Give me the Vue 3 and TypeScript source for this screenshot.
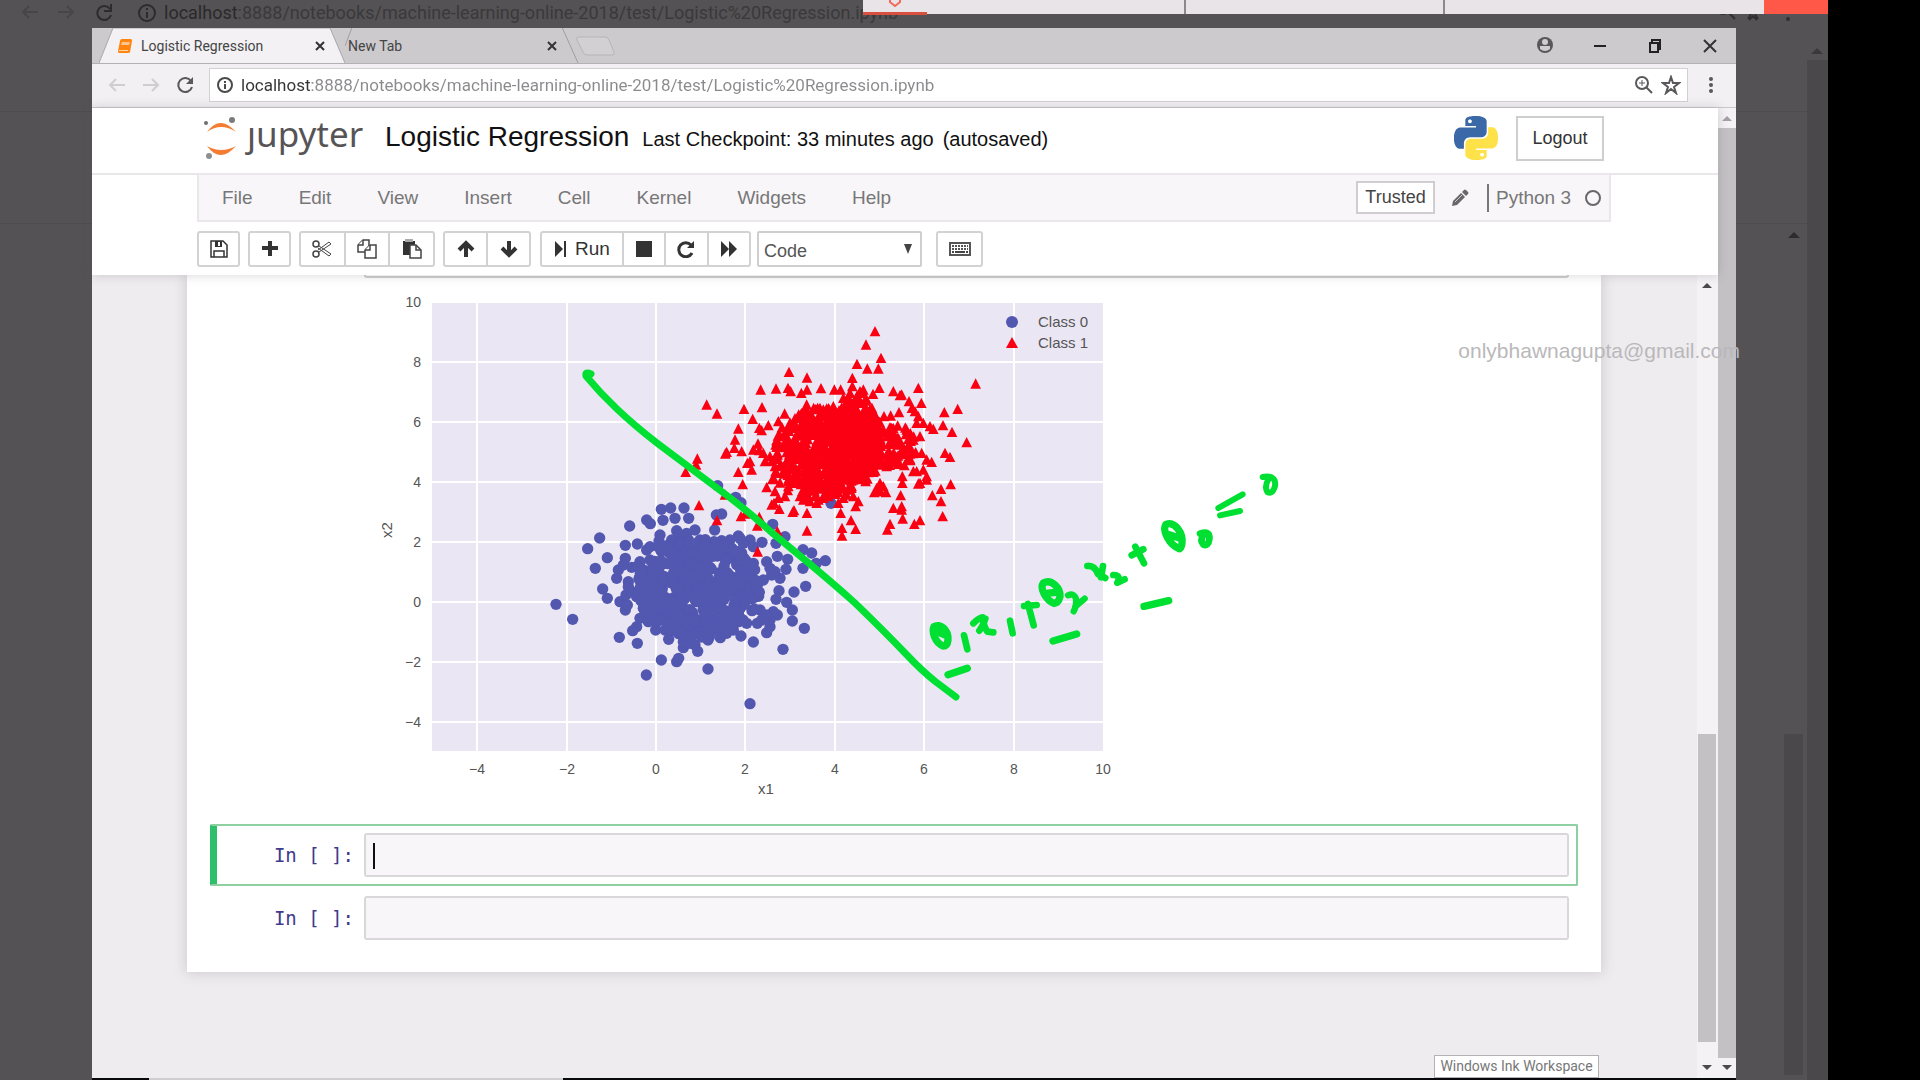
<script setup lang="ts">
import { ref } from 'vue'

type Point = [number, number]

const menus = ['File', 'Edit', 'View', 'Insert', 'Cell', 'Kernel', 'Widgets', 'Help']
const address = ref('localhost:8888/notebooks/machine-learning-online-2018/test/Logistic%20Regression.ipynb')
const cellType = ref('Code')
const cells = ref([
  { source: '', active: true },
  { source: '', active: false },
])

const xTicks = [-4, -2, 0, 2, 4, 6, 8, 10]
const yTicks = [10, 8, 6, 4, 2, 0, -2, -4]
const px = (v: number): number => 656 + Math.round((v * 447) / 10)
const py = (v: number): number => 602 - v * 30
const tick = (v: number): string => (v < 0 ? `\u2212${-v}` : `${v}`)

/* Small seeded generator so the dense part of each cluster is stable between renders. */
function cloud(seed: number, count: number, cx: number, cy: number, rx: number, ry: number): Point[] {
  let s = seed
  const next = (): number => {
    s = (s * 16807) % 2147483647
    return s / 2147483647
  }
  return Array.from({ length: count }, (): Point => {
    const angle = next() * Math.PI * 2
    const radius = Math.sqrt(next())
    return [Math.round(cx + Math.cos(angle) * radius * rx), Math.round(cy + Math.sin(angle) * radius * ry)]
  })
}

const classZero: Point[] = [
  [48, 373], [98, 418], [143, 206], [179, 174], [202, 233], [166, 265], [188, 327], [202, 355], [238, 472],
  [292, 490], [269, 138], [320, 120], [331, 131], [364, 88], [392, 84], [432, 84], [369, 121], [405, 115],
  [446, 115], [256, 196], [292, 192], [360, 165], [320, 210], [256, 235], [357, 183], [364, 540], [410, 545],
  [416, 535], [319, 585], [504, 567], [630, 671], [640, 486], [729, 508], [793, 445], [757, 423], [757, 390],
  [740, 367], [762, 336], [797, 319], [717, 332], [708, 358], [856, 242], [829, 250], [815, 219], [789, 209],
  [789, 265], [743, 238], [712, 229], [738, 268], [735, 170], [698, 133], [708, 190], [666, 187], [545, 102],
  [529, 105], [524, 150], [533, 17], [587, 52], [603, 68], [873, 70], [386, 478], [347, 450], [430, 503],
  [473, 514], [504, 480], [541, 473], [603, 468], [680, 458], [290, 440], [278, 452], [256, 390], [240, 365],
  [262, 375], [230, 295], [235, 270], [265, 305], [265, 320], [595, 168], [545, 182], [520, 190], [440, 160],
  [410, 152], [465, 150], [480, 180], [620, 430], [652, 430], [690, 440], [712, 405], [720, 295], [680, 245],
  [630, 180], [250, 255], [275, 262], [300, 245], [290, 350], [700, 395], [695, 285], [690, 420], [705, 275],
  [450, 490], [465, 495], [440, 470], [455, 470], [610, 190], [385, 195], [310, 385], [300, 415], [660, 390],
  [258, 345], [275, 335], [330, 200], [395, 180], [420, 165], [570, 180], [640, 200], [600, 175], [670, 300],
  [690, 265], [640, 250], [325, 425], [345, 420], [375, 450], [680, 405], [665, 420], [580, 450], [560, 460],
  [310, 270], [330, 240], [290, 260], [650, 325], [640, 350], [505, 465], [430, 485], [355, 200], [555, 200],
  ...cloud(4217, 430, 478, 325, 186, 148),
]

const classOne: Point[] = [
  [525, 155], [498, 195], [543, 235], [471, 253], [502, 267], [535, 267], [457, 295], [267, 277], [321, 294],
  [182, 330], [228, 327], [264, 325], [272, 335], [321, 330], [304, 340], [363, 326], [403, 330], [422, 330],
  [457, 320], [490, 330], [538, 325], [519, 343], [580, 335], [600, 347], [627, 365], [655, 325], [664, 370],
  [733, 398], [773, 388], [827, 312], [729, 437], [756, 457], [800, 488], [735, 520], [750, 532], [752, 614],
  [723, 628], [697, 647], [723, 665], [728, 710], [660, 722], [643, 733], [608, 717], [570, 733], [562, 750],
  [602, 647], [467, 748], [453, 722], [426, 745], [426, 768], [321, 753], [321, 700], [282, 692], [278, 697],
  [422, 700], [467, 680], [475, 665], [215, 675], [238, 688], [200, 623], [128, 614], [115, 577], [155, 570],
  [142, 550], [150, 545], [125, 515], [80, 517], [76, 522], [105, 480], [103, 505], [115, 447], [158, 418],
  [132, 388], [186, 383], [20, 375], [51, 402], [178, 445], [205, 437], [185, 452], [174, 492], [160, 510],
  [190, 520], [195, 545], [210, 530], [178, 512], [235, 425], [254, 402], [320, 375], [353, 385], [400, 380],
  [430, 355], [470, 350], [500, 360], [552, 410], [572, 408], [597, 398], [636, 385], [655, 410], [690, 440],
  [700, 448], [660, 470], [620, 450], [640, 480], [665, 520], [680, 540], [695, 547], [610, 515], [590, 545],
  [560, 560], [650, 575], [640, 575], [670, 570], [660, 610], [680, 600], [655, 612], [607, 590], [607, 610],
  [580, 685], [605, 690], [605, 680], [497, 605], [575, 445], [630, 522], [570, 490], [540, 610], [530, 625],
  [540, 635], [550, 620], [558, 638], [523, 638], [490, 340], [480, 335], [450, 340], [235, 655], [230, 580],
  [225, 635], [255, 650], [310, 660], [330, 665], [350, 670], [375, 650], [430, 655], [415, 670], [440, 645],
  [375, 640], [670, 430], [680, 590], [550, 450], [520, 410], [510, 390], [455, 620], [460, 650], [300, 650],
  [-43, 577], [-8, 537], [-12, 555], [-3, 677], [51, 722], [75, 645], [123, 710], [136, 702], [178, 712],
  [172, 738], [232, 755], [173, 816], [265, 620], [285, 610], [345, 650], [320, 640], [400, 610], [425, 620],
  [645, 395], [650, 430], [605, 345], [570, 540], [540, 555], [520, 575], [215, 545], [225, 560], [480, 370],
  [520, 430], [530, 440], [495, 385], [440, 365], [455, 375], [325, 655], [355, 660], [305, 645], [222, 670],
  ...cloud(9181, 560, 385, 508, 162, 132),
  ...cloud(733, 75, 575, 500, 75, 68),
  ...cloud(5521, 70, 475, 450, 75, 95),
  ...cloud(2801, 45, 330, 590, 115, 75),
]
const triangle = ([x, y]: Point): string => `M${x} ${y - 17}l16 31h-32z`
const classOnePath = classOne.map(triangle).join('')
</script>

<template>
  <div class="screen">
    <div class="desktop">
      <div class="backdrop" aria-hidden="true">
        <div class="back-bar">
          <svg class="back-nav" viewBox="0 0 140 26" width="140" height="26" fill="none" stroke="#474548" stroke-width="2">
            <path d="M38 12H23M29 6l-6 6 6 6M58 12h15M67 6l6 6-6 6" />
            <path d="M110 9a7 7 0 1 0 1 6M111 4v7h-7" stroke="#2c2b2d" />
          </svg>
          <svg class="back-info" viewBox="0 0 18 18" width="18" height="18"><circle cx="9" cy="9" r="8" fill="none" stroke="#2c2b2d" stroke-width="2" /><path d="M9 8v6M9 4v2" stroke="#2c2b2d" stroke-width="2" /></svg>
          <span class="back-url"><b>localhost</b>:8888/notebooks/machine-learning-online-2018/test/Logistic%20Regression.ipynb</span>
        </div>
        <div class="back-rule"></div>
        <div class="back-rule lower"></div>
        <svg class="back-icons" viewBox="0 0 110 24" width="110" height="24" fill="none" stroke="#302f31" stroke-width="2">
          <circle cx="15" cy="5" r="6" /><path d="M20 9l7 7M40 16l3-5M50 16l-3-5M41 17l4-4 4 4" /><circle cx="80" cy="16" r="1" />
        </svg>
        <div class="back-track"><svg viewBox="0 0 12 7" width="12" height="7"><path d="M0 7l6-6 6 6z" fill="#39383a" /></svg></div>
        <div class="back-thumb"></div>
        <svg class="back-arrow" viewBox="0 0 12 7" width="12" height="7"><path d="M0 7l6-6 6 6z" fill="#2c2b2d" /></svg>
      </div>

      <div class="peek" aria-hidden="true">
        <div class="peek-tab"><svg viewBox="0 0 12 8" width="12" height="8"><path d="M1 0v2l5 4 5-4V0" fill="none" stroke="#f4695a" stroke-width="2" /></svg></div>
        <div class="peek-cell first"></div>
        <div class="peek-cell second"></div>
        <div class="peek-cell third"></div>
        <div class="peek-close"></div>
      </div>

      <main class="window">
        <div class="tabstrip">
          <div class="tab active">
            <svg class="tab-shape" viewBox="0 0 246 35" preserveAspectRatio="none"><path d="M0 35L14 0H231L246 35" fill="#f3f1f4" stroke="#a9a7aa" vector-effect="non-scaling-stroke" /></svg>
            <svg viewBox="0 0 16 16" width="16" height="16"><path d="M5 1h9q1 0 1 2l-2 11q0 1-2 1H2q-1 0-1-2L3 3q0-2 2-2z" fill="#ff8410" /><path d="M5 4h8l-1 3H4z" fill="#ffc58c" /><path d="M2 12h9v1H2z" fill="#ffd9a8" /></svg>
            <span class="tab-title">Logistic Regression</span>
            <button class="tab-close" aria-label="Close tab"><svg viewBox="0 0 10 10" width="10" height="10"><path d="M1 1l8 8M9 1l-8 8" stroke="#333" stroke-width="2" /></svg></button>
          </div>
          <div class="tab idle">
            <svg class="tab-shape" viewBox="0 0 239 35" preserveAspectRatio="none"><path d="M0 18L7 0M222 0L238 35" fill="none" stroke="#a09ea1" vector-effect="non-scaling-stroke" /></svg>
            <span class="tab-title">New Tab</span>
            <button class="tab-close" aria-label="Close tab"><svg viewBox="0 0 10 10" width="10" height="10"><path d="M1 1l8 8M9 1l-8 8" stroke="#333" stroke-width="2" /></svg></button>
          </div>
          <button class="tab-new" aria-label="New tab"><svg viewBox="0 0 42 22" width="42" height="22"><path d="M3 2h27q3 0 4 3l5 12q1 3-2 3H12q-3 0-4-3L2 5q-1-3 1-3z" fill="#d3d0d3" stroke="#b6b4b7" /></svg></button>
          <div class="window-tools">
            <button aria-label="Profile"><svg viewBox="0 0 18 18" width="18" height="18"><circle cx="9" cy="8" r="8" fill="#59575a" /><circle cx="9" cy="5" r="3" fill="#d0cdd0" /><path d="M4 12V9h10v3q-5 4-10 0z" fill="#d0cdd0" /></svg></button>
            <button aria-label="Minimise"><svg viewBox="0 0 18 18" width="18" height="18"><path d="M3 9h12" stroke="#222" stroke-width="2" /></svg></button>
            <button aria-label="Restore"><svg viewBox="0 0 18 18" width="18" height="18"><path d="M4 6h8v9H4zM6 6V3h8v9h-2" fill="none" stroke="#222" stroke-width="2" /></svg></button>
            <button aria-label="Close"><svg viewBox="0 0 18 18" width="18" height="18"><path d="M3 3l12 12M15 3L3 15" stroke="#333" stroke-width="2" /></svg></button>
          </div>
        </div>

        <div class="toolbar">
          <button aria-label="Back"><svg viewBox="0 0 20 20" width="20" height="20"><path d="M18 10H3M9 4l-6 6 6 6" fill="none" stroke="#cfcdd0" stroke-width="2" /></svg></button>
          <button aria-label="Forward"><svg viewBox="0 0 20 20" width="20" height="20"><path d="M2 10h15M11 4l6 6-6 6" fill="none" stroke="#cfcdd0" stroke-width="2" /></svg></button>
          <button aria-label="Reload"><svg viewBox="0 0 20 20" width="20" height="20"><path d="M16 6a7 7 0 1 0 1 6" fill="none" stroke="#59575a" stroke-width="2" /><path d="M18 2v7h-7z" fill="#59575a" /></svg></button>
          <div class="omnibox">
            <svg viewBox="0 0 18 18" width="18" height="18"><circle cx="9" cy="9" r="7" fill="none" stroke="#4b494c" stroke-width="2" /><path d="M9 8v5M9 5v2" stroke="#4b494c" stroke-width="2" /></svg>
            <input v-model="address" class="address" aria-label="Address" spellcheck="false" />
            <button aria-label="Zoom"><svg viewBox="0 0 20 20" width="20" height="20" fill="none" stroke="#59575a" stroke-width="2"><circle cx="9" cy="8" r="6" /><path d="M13 12l6 6" /><path d="M9 5v6M6 8h6" stroke-width="1" /></svg></button>
            <button aria-label="Bookmark"><svg viewBox="0 0 20 20" width="20" height="20"><path d="M10 2l2 6h6l-5 4 2 6-5-4-5 4 2-6-5-4h6z" fill="none" stroke="#59575a" stroke-width="2" /></svg></button>
          </div>
          <button class="kebab" aria-label="Menu"><svg viewBox="0 0 6 20" width="6" height="20" fill="#59575a"><circle cx="3" cy="4" r="2" /><circle cx="3" cy="10" r="2" /><circle cx="3" cy="16" r="2" /></svg></button>
        </div>

        <div class="viewport">
          <div class="page">
            <header class="header">
              <div class="title-row">
                <a class="brand" href="#" aria-label="Jupyter home">
                  <svg viewBox="0 0 36 44" width="36" height="44"><path d="M4 16Q17-2 33 16Q18 6 4 16z" fill="#f37e33" /><path d="M4 30Q17 48 33 30Q18 38 4 30z" fill="#f37e33" /><circle cx="3" cy="7" r="2" fill="#6f6e70" /><circle cx="29" cy="4" r="3" fill="#7a797b" /><circle cx="6" cy="40" r="3" fill="#8f8e90" /></svg>
                  <span>ȷupyter</span>
                </a>
                <h1>Logistic Regression</h1>
                <span class="checkpoint">Last Checkpoint: 33 minutes ago</span>
                <span class="autosave">(autosaved)</span>
                <svg class="python" viewBox="0 0 24 24" width="44" height="44">
                  <path fill="#3b69a8" d="M14.25.18l.9.2.73.26.59.3.45.32.34.34.25.34.16.33.1.3.04.26.02.2-.01.13V8.5l-.05.63-.13.55-.21.46-.26.38-.3.31-.33.25-.35.19-.35.14-.33.1-.3.07-.26.04-.21.02H8.77l-.69.05-.59.14-.5.22-.41.27-.33.32-.27.35-.2.36-.15.37-.1.35-.07.32-.04.27-.02.21v3.06H3.17l-.21-.03-.28-.07-.32-.12-.35-.18-.36-.26-.36-.36-.35-.46-.32-.59-.28-.73-.21-.88-.14-1.05-.05-1.23.06-1.22.16-1.04.24-.87.32-.71.36-.57.4-.44.42-.33.42-.24.4-.16.36-.1.32-.05.24-.01h.16l.06.01h8.16v-.83H6.18l-.01-2.75-.02-.37.05-.34.11-.31.17-.28.25-.26.31-.23.38-.2.44-.18.51-.15.58-.12.64-.1.71-.06.77-.04.84-.02 1.27.05zm-6.3 1.98l-.23.33-.08.41.08.41.23.34.33.22.41.09.41-.09.33-.22.23-.34.08-.41-.08-.41-.23-.33-.33-.22-.41-.09-.41.09z" />
                  <path fill="#ffe24a" d="M21.04 6.11l.28.06.32.12.35.18.36.27.36.35.35.47.32.59.28.73.21.88.14 1.04.05 1.23-.06 1.23-.16 1.04-.24.86-.32.71-.36.57-.4.45-.42.33-.42.24-.4.16-.36.09-.32.05-.24.02-.16-.01h-8.22v.82h5.84l.01 2.76.02.36-.05.34-.11.31-.17.29-.25.25-.31.24-.38.2-.44.17-.51.15-.58.13-.64.09-.71.07-.77.04-.84.01-1.27-.04-1.07-.14-.9-.2-.73-.25-.59-.3-.45-.33-.34-.34-.25-.34-.16-.33-.1-.3-.04-.25-.02-.2.01-.13v-5.34l.05-.64.13-.54.21-.46.26-.38.3-.32.33-.24.35-.2.35-.14.33-.1.3-.06.26-.04.21-.02.13-.01h5.84l.69-.05.59-.14.5-.21.41-.28.33-.32.27-.35.2-.36.15-.36.1-.35.07-.32.04-.28.02-.21V6.07h2.09l.14.01zm-6.47 14.25l-.23.33-.08.41.08.41.23.33.33.23.41.08.41-.08.33-.23.23-.33.08-.41-.08-.41-.23-.33-.33-.23-.41-.08-.41.08z" />
                </svg>
                <button class="logout">Logout</button>
              </div>

              <nav class="menubar">
                <a v-for="menu in menus" :key="menu" href="#" class="menu">{{ menu }}</a>
                <button class="trusted">Trusted</button>
                <svg class="pencil" viewBox="0 0 18 18" width="18" height="18"><path d="M1 17l1-5 8-8 4 4-8 8zM11 3l2-2q1-1 2 0l2 2q1 1 0 2l-2 2z" fill="#69676a" /><path d="M4 13l7-7" stroke="#c9c7ca" /></svg>
                <div class="kernel">
                  <span>Python 3</span>
                  <svg viewBox="0 0 18 18" width="18" height="18"><circle cx="9" cy="9" r="7" fill="none" stroke="#69676a" stroke-width="2" /></svg>
                </div>
              </nav>

              <div class="actions">
                <div class="group save"><button aria-label="Save"><svg viewBox="0 0 18 18" width="18" height="18" fill="none" stroke="#333" stroke-width="2"><path d="M1 1h12l4 4v12H1z" stroke-width="1.5" /><path d="M4 17v-6h10v6" stroke-width="1.5" /><path d="M5 1v6h7V1z" fill="#333" stroke="none" /><path d="M9 2v4" stroke="#fff" /></svg></button></div>
                <div class="group add"><button aria-label="Insert cell"><svg viewBox="0 0 18 18" width="18" height="18"><path d="M9 1v15M1 8h16" stroke="#333" stroke-width="4" /></svg></button></div>
                <div class="group edit">
                  <button aria-label="Cut"><svg viewBox="0 0 20 18" width="20" height="18" fill="none" stroke="#444"><circle cx="4" cy="4" r="3" stroke-width="1.5" /><circle cx="4" cy="14" r="3" stroke-width="1.5" /><path d="M7 6l12 8-2 2L6 8M7 12l12-8-2-2L6 10" /></svg></button>
                  <button aria-label="Copy"><svg viewBox="0 0 20 20" width="20" height="20" fill="#fff" stroke="#444" stroke-width="1.5"><path d="M6 1h6v12H1V6z" /><path d="M6 1v5H1" /><path d="M13 6h6v13H8v-8z" /><path d="M13 6v5H8" /></svg></button>
                  <button aria-label="Paste"><svg viewBox="0 0 20 20" width="20" height="20"><path d="M1 2h12v14H1z" fill="#333" /><path d="M3 0h8v3H3z" fill="#aaa" /><path d="M8 6h6l5 5v8H8z" fill="#fff" stroke="#444" stroke-width="1.5" /><path d="M14 6v5h5" fill="none" stroke="#444" stroke-width="1.5" /></svg></button>
                </div>
                <div class="group move">
                  <button aria-label="Move up"><svg viewBox="0 0 18 18" width="18" height="18"><path d="M9 17V3M2 10l7-7 7 7" fill="none" stroke="#333" stroke-width="4" /></svg></button>
                  <button aria-label="Move down"><svg viewBox="0 0 18 18" width="18" height="18"><path d="M9 1v14M2 8l7 7 7-7" fill="none" stroke="#333" stroke-width="4" /></svg></button>
                </div>
                <div class="group run">
                  <button class="run-button"><svg viewBox="0 0 13 18" width="13" height="18"><path d="M1 1l8 8-8 8zM10 1h2v16h-2z" fill="#333" /></svg>Run</button>
                  <button aria-label="Interrupt"><svg viewBox="0 0 18 18" width="18" height="18"><path d="M1 1h16v16H1z" fill="#333" /></svg></button>
                  <button aria-label="Restart"><svg viewBox="0 0 18 18" width="18" height="18"><path d="M14 5a7 7 0 1 0 1 8" fill="none" stroke="#333" stroke-width="3" /><path d="M17 1v7h-7z" fill="#333" /></svg></button>
                  <button aria-label="Restart and run all"><svg viewBox="0 0 18 18" width="18" height="18"><path d="M1 1l8 8V1l8 8-8 8V9l-8 8z" fill="#333" /></svg></button>
                </div>
                <div class="type-picker">
                  <select v-model="cellType" aria-label="Cell type">
                    <option>Code</option>
                    <option>Markdown</option>
                  </select>
                  <svg viewBox="0 0 8 10" width="8" height="10"><path d="M0 0h8L4 10z" fill="#444" /></svg>
                </div>
                <div class="group palette"><button aria-label="Command palette"><svg viewBox="0 0 22 14" width="22" height="14"><path d="M1 1h20v12H1z" fill="#fff" stroke="#555" stroke-width="2" /><path d="M3 4h16M3 7h16" stroke="#555" stroke-width="2" stroke-dasharray="2 1" /><path d="M3 10h2M6 10h10M17 10h2" stroke="#444" stroke-width="2" /></svg></button></div>
              </div>
            </header>

            <div class="site">
              <div class="notebook">
                <div class="sheet">
                  <div class="previous-input"></div>
                  <svg class="plot" viewBox="364 278 936 546" role="img" aria-label="Scatter plot of two classes">
                    <rect x="432" y="303" width="671" height="448" fill="#ebe6f4" />
                    <g stroke="#fff" stroke-width="2">
                      <line v-for="v in xTicks.slice(0, 7)" :key="'gx' + v" :x1="px(v)" :x2="px(v)" y1="303" y2="751" />
                      <line v-for="v in yTicks.slice(1)" :key="'gy' + v" x1="432" x2="1103" :y1="py(v)" :y2="py(v)" />
                    </g>
                    <g class="ticks">
                      <text v-for="v in xTicks" :key="'tx' + v" :x="px(v)" y="774" text-anchor="middle">{{ tick(v) }}</text>
                      <text v-for="v in yTicks" :key="'ty' + v" x="421" :y="py(v) + 5" text-anchor="end">{{ tick(v) }}</text>
                    </g>
                    <text class="axis" x="766" y="794" text-anchor="middle">x1</text>
                    <text class="axis" text-anchor="middle" transform="translate(392 530) rotate(-90)">x2</text>
                    <g transform="translate(540 480) scale(.33333)" fill="#5257b0">
                      <circle v-for="(p, i) in classZero" :key="i" :cx="p[0]" :cy="p[1]" r="17" />
                    </g>
                    <path :d="classOnePath" transform="translate(700 280) scale(.33333)" fill="#fb0012" />
                    <circle cx="1012" cy="322" r="6" fill="#5257b0" />
                    <path d="M1012 337l6 11h-12z" fill="#fb0012" />
                    <g class="legend">
                      <text x="1038" y="327">Class 0</text>
                      <text x="1038" y="348">Class 1</text>
                    </g>
                    <g fill="none" stroke="#00e033" stroke-linecap="round" stroke-linejoin="round">
                      <path d="M591 374Q585 371 586 376Q600 393 617 409Q635 426 657 443L717 488Q747 510 770 531L811 565Q835 585 855 603Q883 630 906 654Q922 671 936 682L956 697" stroke-width="7" />
                      <g transform="translate(900 450) scale(.33333)" stroke-width="22">
                        <path d="M130 588C105 580 95 545 102 530C120 518 146 540 144 570Q142 588 130 588M110 545L138 556" />
                        <path d="M192 556L202 598M220 520Q236 504 248 502Q250 528 262 545L280 547M256 506Q248 530 238 542M330 512L338 550" stroke-width="20" />
                        <path d="M372 468L410 465M384 462L401 526" stroke-width="20" />
                        <path d="M462 460C438 450 418 415 430 399C455 385 482 415 480 440Q475 460 462 460M440 430L474 426" />
                        <path d="M504 436Q522 428 528 446Q530 468 521 484M526 470L554 446" stroke-width="19" />
                        <path d="M562 348Q584 346 594 372L616 384M609 348L603 382M640 375Q664 374 652 398L674 388" stroke-width="20" />
                        <path d="M695 316L730 298M706 290L732 340" stroke-width="20" />
                        <path d="M838 296C808 285 785 240 798 223C825 212 850 250 846 280Q844 296 838 296M808 254L838 264" />
                        <path d="M900 251Q932 240 928 268Q925 290 910 284Q898 270 912 254" stroke-width="20" />
                        <path d="M955 174L1028 133M960 196L1020 183M1088 81Q1130 74 1125 108Q1118 134 1102 126Q1092 110 1106 86" stroke-width="18" />
                        <path d="M144 674L202 655M459 573L530 552M732 469L806 452" />
                      </g>
                    </g>
                  </svg>
                  <div v-for="(cell, i) in cells" :key="i" class="cell" :class="{ selected: cell.active }">
                    <label class="prompt" :for="'cell-' + i">In [ ]:</label>
                    <div class="input-area">
                      <textarea :id="'cell-' + i" v-model="cell.source" rows="1"></textarea>
                      <div v-if="cell.active" class="caret"></div>
                    </div>
                  </div>
                </div>
              </div>
              <div class="scroll inner">
                <svg viewBox="0 0 10 6" width="10" height="6"><path d="M0 6l5-5 5 5z" fill="#4b494c" /></svg>
                <div class="scroll-gap"></div>
                <div class="thumb"></div>
                <svg viewBox="0 0 10 6" width="10" height="6"><path d="M0 0l5 5 5-5z" fill="#4b494c" /></svg>
              </div>
            </div>
          </div>
          <div class="scroll outer">
            <svg viewBox="0 0 10 6" width="10" height="6"><path d="M0 6l5-5 5 5z" fill="#a3a1a4" /></svg>
            <div class="thumb"></div>
            <svg viewBox="0 0 10 6" width="10" height="6"><path d="M0 0l5 5 5-5z" fill="#4b494c" /></svg>
          </div>
        </div>
        <div class="taskbar"></div>
        <div class="tooltip" role="tooltip">Windows Ink Workspace</div>
        <div class="watermark">onlybhawnagupta@gmail.com</div>
      </main>
    </div>
  </div>
</template>

<style>
body {
  margin: 0;
  background: #000;
}
</style>

<style scoped>
* {
  box-sizing: border-box;
}
.screen {
  height: 100vh;
  padding-right: 92px;
  overflow: hidden;
  background: #000;
  font-family: 'Liberation Sans', Arial, sans-serif;
}
svg {
  display: block;
  flex: none;
}
button {
  display: flex;
  align-items: center;
  justify-content: center;
  margin: 0;
  padding: 0;
  border: 0;
  background: none;
  font-family: inherit;
}
a {
  color: inherit;
  text-decoration: none;
}
.desktop {
  position: relative;
  height: 100%;
  padding: 28px 92px 0;
  overflow: hidden;
  background: #545254;
}

/* dimmed browser behind the window */
.backdrop,
.peek {
  position: absolute;
  top: 0;
  right: 0;
}
.backdrop {
  bottom: 0;
  left: 0;
}
.back-bar {
  display: flex;
  align-items: center;
  height: 26px;
}
.back-info {
  margin: 0 8px 0 -2px;
}
.back-url {
  color: #3a393b;
  font: 18px/26px Roboto, sans-serif;
  white-space: nowrap;
}
.back-url b {
  color: #2a292b;
  font-weight: 400;
}
.back-rule {
  height: 86px;
  border-bottom: 1px solid #4d4b4e;
}
.back-rule.lower {
  height: 112px;
}
.back-icons {
  position: absolute;
  top: 3px;
  right: 10px;
}
.back-track {
  position: absolute;
  top: 40px;
  right: 0;
  bottom: 0;
  width: 21px;
  padding: 7px 4px;
  background: linear-gradient(#545254 20px, #4a484b 20px);
}
.back-thumb {
  position: absolute;
  top: 734px;
  right: 25px;
  bottom: 5px;
  width: 19px;
  background: #4a484b;
}
.back-arrow {
  position: absolute;
  top: 231px;
  right: 28px;
}
.peek {
  display: flex;
  width: 965px;
  height: 14px;
}
.peek-tab {
  display: flex;
  justify-content: center;
  width: 64px;
  height: 15px;
  border-bottom: 3px solid #d9503f;
  background: #e8e4e7;
}
.peek-cell {
  border-right: 2px solid #8b898c;
  background: #e8e4e7;
}
.peek-cell.first {
  flex: 258;
}
.peek-cell.second {
  flex: 258;
}
.peek-cell.third {
  flex: 321;
  border: 0;
}
.peek-close {
  width: 64px;
  background: #ff5848;
}

/* browser window */
.window {
  position: relative;
  display: flex;
  flex-direction: column;
  height: 100%;
  background: #f2f0f3;
}
.tabstrip {
  display: flex;
  align-items: center;
  height: 36px;
  padding-left: 7px;
  border-bottom: 1px solid #b3b1b4;
  background: #cdcacd;
  color: #444;
  font: 14px/20px Roboto, sans-serif;
}
.tab {
  position: relative;
  display: flex;
  align-items: center;
  height: 35px;
}
.tab.active {
  width: 246px;
  padding: 0 20px 0 18px;
}
.tab.idle {
  width: 234px;
  padding: 0 22px 0 3px;
}
.tab-shape {
  position: absolute;
  inset: 0;
  width: 100%;
  height: 100%;
}
.tab > :not(.tab-shape) {
  position: relative;
}
.tab.active .tab-title {
  margin-left: 8px;
}
.tab-close {
  margin-left: auto;
}
.tab-new {
  margin-left: -4px;
}
.window-tools {
  display: flex;
  gap: 37px;
  margin-left: auto;
  padding-right: 17px;
}
.toolbar {
  display: flex;
  align-items: center;
  height: 44px;
  padding: 0 22px 1px 15px;
  border-bottom: 1px solid #c9c7ca;
}
.toolbar > button {
  margin-right: 14px;
}
.toolbar > .kebab {
  margin: 0 0 0 20px;
}
.omnibox {
  display: flex;
  flex: 1;
  align-items: center;
  gap: 8px;
  height: 34px;
  padding: 0 6px;
  border: 1px solid #d3d1d4;
  background: #fff;
}
.omnibox svg + .address {
  margin-left: -1px;
}
.address {
  flex: 1;
  min-width: 0;
  padding: 0;
  border: 0;
  outline: 0;
  background: linear-gradient(90deg, #333 71px, #8b898c 71px);
  background-clip: text;
  color: transparent;
  font: 17px/26px Roboto, sans-serif;
}
.viewport {
  display: flex;
  flex: 1;
  min-height: 0;
}
.page {
  display: flex;
  flex: 1;
  flex-direction: column;
  min-width: 0;
}

/* notebook header */
.header {
  position: relative;
  z-index: 1;
  background: #fff;
  box-shadow: 0 0 10px rgba(87, 87, 87, 0.25);
}
.title-row {
  display: flex;
  align-items: center;
  height: 67px;
  padding: 0 114px 5px 111px;
  border-bottom: 2px solid #e9e7ea;
  color: #111;
  font-size: 20px;
  white-space: nowrap;
}
.brand {
  display: flex;
  align-items: center;
  width: 182px;
  color: #565457;
  font: 35px/44px 'Noto Sans', sans-serif;
}
.brand span {
  margin: -8px 0 0 8px;
}
h1 {
  margin: -2px 0 0;
  font-size: 28px;
  font-weight: 400;
  line-height: 40px;
}
.checkpoint {
  margin: 2px 9px 0 13px;
}
.autosave {
  margin-top: 2px;
}
.python {
  margin: 0 18px 0 auto;
}
.logout {
  width: 88px;
  height: 45px;
  border: 2px solid #cfcdd0;
  background: #fff;
  color: #333;
  font-size: 18px;
}
.menubar {
  display: flex;
  align-items: center;
  height: 47px;
  margin: 0 107px 0 105px;
  border: 2px solid #e9e7ea;
  border-top: 0;
  background: #f8f6f9;
  color: #777;
  font-size: 19px;
}
.menu {
  padding: 0 23px;
}
.menubar .trusted {
  width: 79px;
  height: 33px;
  margin-left: auto;
  border: 2px solid #cfcdd0;
  background: #fff;
  color: #444;
  font-size: 18px;
}
.pencil {
  margin: 0 18px 0 16px;
}
.kernel {
  display: flex;
  align-items: center;
  gap: 13px;
  height: 28px;
  padding: 0 7px 0 7px;
  border-left: 2px solid #777;
}
.actions {
  display: flex;
  height: 53px;
  padding: 9px 105px;
}
.group {
  display: flex;
  height: 36px;
  margin-right: 8px;
  border: 2px solid #d3d1d4;
  border-radius: 3px;
}
.group button {
  flex: 1 1 0;
  color: #333;
  font-size: 19px;
}
.group button + button {
  border-left: 2px solid #d3d1d4;
}
.save {
  width: 43px;
}
.add {
  width: 43px;
}
.edit {
  width: 136px;
}
.move {
  width: 88px;
  margin-right: 9px;
}
.run {
  width: 211px;
  margin-right: 6px;
}
.group .run-button {
  flex: 0 0 80px;
  gap: 8px;
}
.type-picker {
  position: relative;
  width: 165px;
  height: 36px;
  margin-right: 14px;
}
.type-picker select {
  width: 100%;
  height: 100%;
  padding: 3px 5px 0;
  border: 2px solid #cfcdd0;
  border-radius: 2px;
  appearance: none;
  background: #fff;
  color: #555;
  font: 18px 'Liberation Sans', Arial, sans-serif;
}
.type-picker svg {
  position: absolute;
  top: 13px;
  right: 10px;
}
.palette {
  width: 47px;
}

/* notebook body */
.site {
  display: flex;
  flex: 1;
  min-height: 0;
  background: #eeecef;
}
.notebook {
  flex: 1;
  min-width: 0;
  padding: 0 96px 0 95px;
}
.sheet {
  padding: 0 23px 22px;
  background: #fff;
  box-shadow: 0 0 12px 1px rgba(87, 87, 87, 0.22);
}
.previous-input {
  height: 3px;
  margin: 0 9px 0 154px;
  border: 2px solid #cfcdd0;
  border-top: 0;
  border-radius: 0 0 3px 3px;
}
.plot {
  width: 936px;
  height: 546px;
  margin-left: 154px;
}
.ticks {
  fill: #555;
  font-size: 14px;
}
.axis,
.legend {
  fill: #555;
  font-size: 15px;
}
.cell {
  display: flex;
  align-items: center;
  margin-bottom: 1px;
  padding: 7px;
  border: 2px solid transparent;
  border-radius: 2px;
}
.cell.selected {
  border-color: #8fd0a2;
  border-left-color: #2fbf6b;
  box-shadow: inset 5px 0 #2fbf6b;
}
.prompt {
  width: 145px;
  padding-right: 10px;
  color: #3f3a8c;
  font: 19px/26px 'DejaVu Sans Mono', monospace;
  text-align: right;
}
.input-area {
  position: relative;
  display: flex;
  flex: 1;
}
textarea {
  width: 100%;
  height: 44px;
  padding: 10px;
  border: 2px solid #d9d7da;
  border-radius: 3px;
  outline: 0;
  background: #f8f6f9;
  font: 19px/22px 'DejaVu Sans Mono', monospace;
  resize: none;
}
.caret {
  position: absolute;
  top: 10px;
  left: 9px;
  width: 2px;
  height: 26px;
  background: #111;
}

/* scroll bars */
.scroll {
  display: flex;
  flex-direction: column;
  align-items: center;
  background: #f4f2f5;
}
.scroll.inner {
  width: 21px;
  padding: 7px 2px 7px 1px;
}
.scroll.outer {
  width: 18px;
  padding: 7px 0;
}
.thumb {
  width: 100%;
  background: #c3c1c4;
}
.outer .thumb {
  flex: 1;
  margin: 7px 0;
}
.scroll-gap {
  flex: 446;
}
.inner .thumb {
  flex: 308;
  margin-bottom: 23px;
}
.taskbar {
  height: 2px;
  background: linear-gradient(90deg, #08090d 57px, #cfcdd0 57px 471px, #08090d 471px);
}
.tooltip {
  position: absolute;
  right: 137px;
  bottom: 2px;
  width: 165px;
  border: 1px solid #b3b1b4;
  background: #fff;
  color: #777;
  font: 14px/21px Roboto, sans-serif;
  text-align: center;
  white-space: nowrap;
}
.watermark {
  position: absolute;
  top: 311px;
  right: -4px;
  color: #bab8bb;
  font-size: 21px;
  line-height: 24px;
}
</style>
